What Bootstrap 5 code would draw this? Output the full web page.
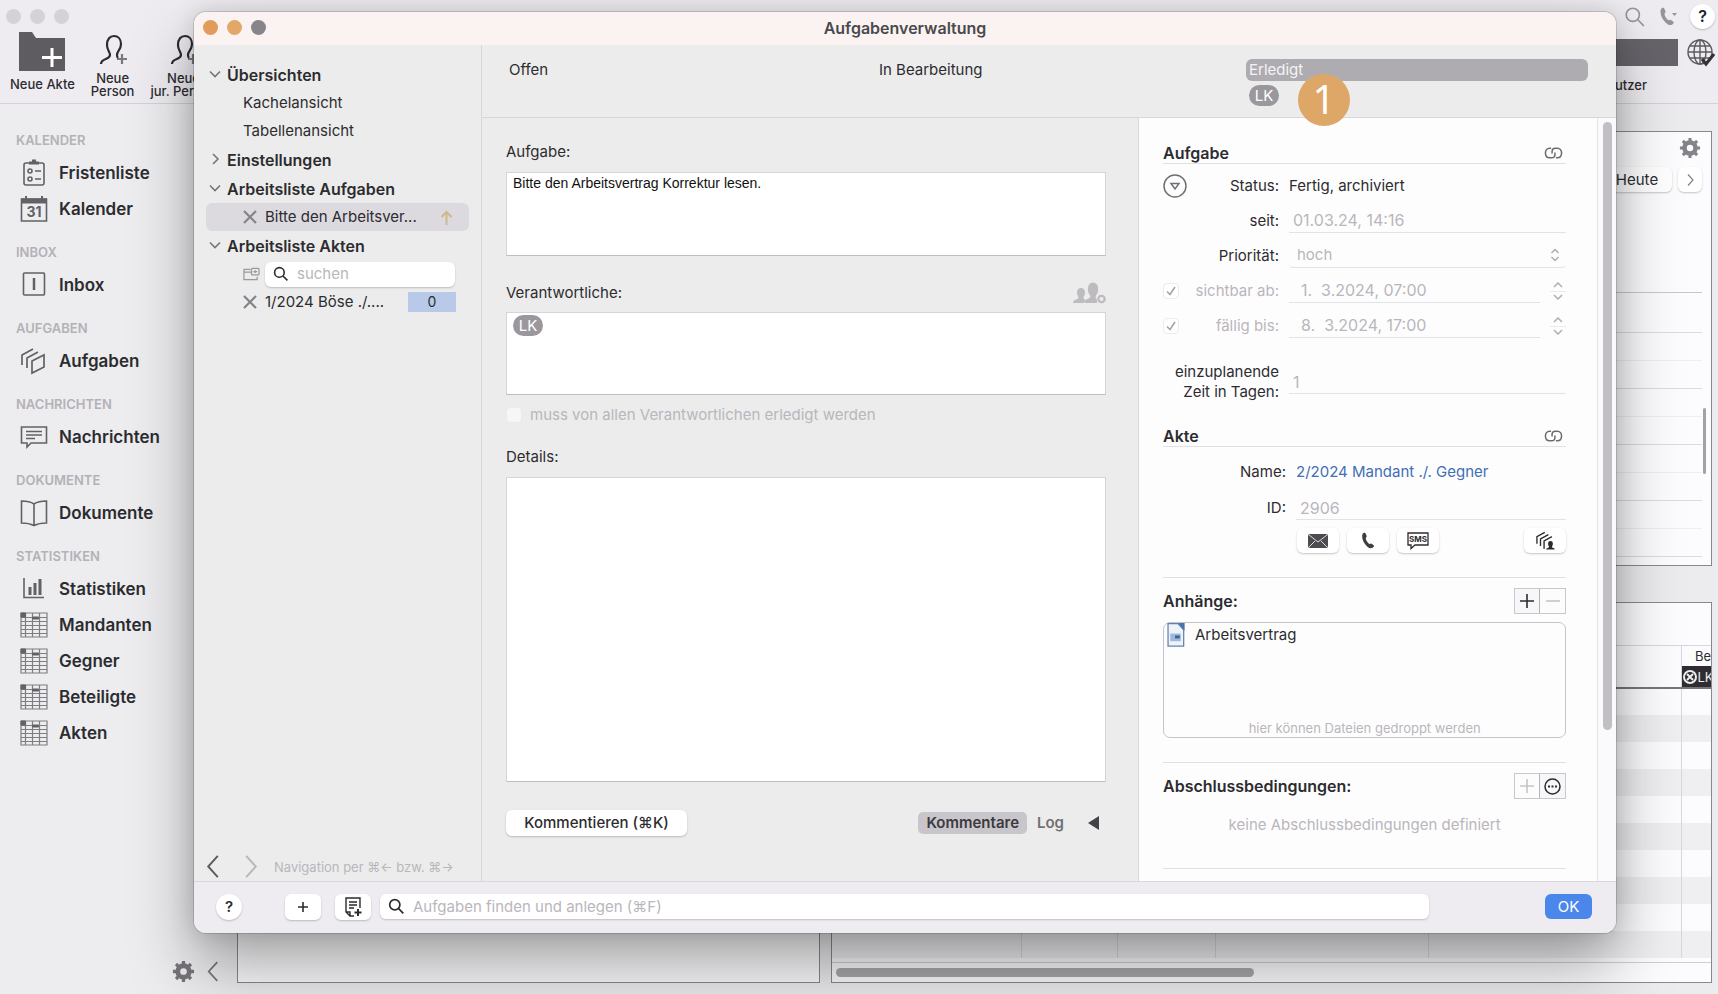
<!DOCTYPE html>
<html lang="de">
<head>
<meta charset="utf-8">
<meta name="viewport" content="width=device-width, initial-scale=1">
<title>Aufgabenverwaltung</title>
<link href="https://cdn.jsdelivr.net/npm/bootstrap@5.3.0/dist/css/bootstrap.min.css" rel="stylesheet">
<style>
:root{--ink:#2c2c30;--muted:#b9b6bc;--line:#d9d6dc;--pane:#ececec}
body{font-family:Inter,"Liberation Sans",sans-serif;font-size:15px;line-height:20px;color:var(--ink);background:#ececee;overflow:hidden}
svg{display:block;flex:none}
svg:not([fill]){fill:none}
svg:not([stroke]){stroke:currentColor}
button{font:inherit;color:inherit;border:0;background:none;padding:0}
input,select,textarea{font:inherit;color:inherit}
input:disabled,select:disabled{opacity:1;color:var(--muted)}
::placeholder{color:var(--muted);opacity:1}
.min0{min-width:0;min-height:0}
/* main window */
.app{min-height:100vh}
.topbar{height:104px;border-bottom:1px solid #d3d1d6;background:#eeecf0;font-size:13px;line-height:13px;font-weight:500}
.dots i{width:15px;height:15px;border-radius:50%;background:#d4d2d6}
.tool{text-align:center}
.two{padding-top:6px}
.two span{display:block}
.side{width:237px;flex:none;padding:11px 0 0 16px;background:#ededef}
.side h2{font-size:13px;line-height:20px;padding:15px 0 5px;margin:0;color:#b4b1b7;font-weight:600}
.side a{height:36px;font-size:17px;font-weight:600;color:var(--ink);text-decoration:none;padding-left:4px;gap:11px}
.side a svg{color:#626166;width:28px;height:28px}
.main{padding:27px 6px 11px 0;gap:11px}
.leftpane{width:583px;flex:none}
.panel{background:#fcfbfd;border:1px solid #8a888c}
.softbtn{background:#fff;border-radius:6px;box-shadow:0 1px 2px rgba(0,0,0,.22);display:inline-flex;align-items:center;justify-content:center}
.cal{height:435px}
.cal .hour{height:56px;border-top:1px solid #dcdade}
.cal .hour::before{content:"";display:block;border-top:1px solid #efedf1;margin-top:27px}
.cal .short{height:40px;border-top:1px solid #c9c7cc}
.cal .end{height:9px;border-top:1px solid #dcdade}
.cal .vbar{width:3px;height:66px;right:5px;top:276px;background:#a3a1a6;border-radius:2px}
.grid-t{table-layout:fixed;width:100%;border-collapse:collapse}
.grid-t td,.grid-t th{border-right:1px solid #d9d7dc;padding:0;height:27px;font-weight:400}
.grid-t th{height:41px;border-bottom:2px solid #77757a;font-size:13px;line-height:20px;vertical-align:bottom}
.grid-t tr>:last-child{border-right:0}
.grid-t tbody tr:nth-child(even){background:#efeff2}
.cellbadge{background:#2f2d31;color:#eee;height:21px}
.hbar{height:9px;border-radius:5px;background:#a9a7ab;width:418px}
/* dialog */
.dlg{position:absolute;inset:12px 102px 61px 194px;border-radius:12px;background:var(--pane);box-shadow:0 0 0 1px rgba(0,0,0,.14),0 34px 64px rgba(0,0,0,.34),0 0 24px rgba(0,0,0,.14);overflow:hidden}
.tbar{height:33px;background:#fbf3f1;font-weight:600;font-size:16px;color:#4a494d;padding:0 9px 2px;display:grid;grid-template-columns:1fr auto 1fr}
.dlg .dots i:nth-child(1){background:#e19b5a}.dlg .dots i:nth-child(2){background:#e3a868}.dlg .dots i:nth-child(3){background:#87858a}
.tree{width:288px;flex:none;border-right:1px solid var(--line);padding:15px 12px 0}
.tree .grp{height:29px;font-size:16px;font-weight:600;gap:5px;padding-left:2px}
.tree .grp svg{width:14px;height:14px;color:#77757a}
.tree .leaf{height:28px;padding-left:37px;gap:8px;border-radius:6px}
.tree .on{background:#dddadf}
.tree a{color:inherit;text-decoration:none}
.find{background:#fff;border-radius:6px;box-shadow:0 1px 2px rgba(0,0,0,.2);height:25px}
.find input{border:0;background:none;outline:0;min-width:0;padding:0}
.count{background:#b9cae9;width:48px;height:20px;font-size:14px;text-align:center}
.hint{font-size:13px;color:var(--muted)}
.stages{height:73px;border-bottom:1px solid var(--line);padding:14px 28px 0 24px;display:grid;grid-template-columns:repeat(3,minmax(0,1fr));gap:28px;align-content:start}
.stages .st{border-radius:6px;height:22px;padding:0 3px;line-height:22px}
.stages .done{background:#aeacb0;color:#f4f3f5}
.chip{background:#9a989d;color:#fff;border-radius:11px;height:21px;line-height:21px;width:30px;text-align:center;font-size:15px}
.callout-no{position:absolute;left:52px;top:15px;width:52px;height:52px;border-radius:50%;background:#dea767;color:#fff;font:40px/50px "Noto Sans",sans-serif;text-align:center}
.mid{padding:24px 32px 45px 24px}
.box{background:#fff;border:1px solid #d6d3da;border-bottom-color:#bfbcc3;padding:2px 6px}
textarea.box{resize:none;display:block;width:100%;border-radius:0;outline:0}
.taskbox{height:84px;font:14px/16px "Liberation Sans",sans-serif;color:#111}
.dim{color:var(--muted)}
.tick{appearance:none;width:16px;height:16px;border-radius:4px;background:#f6f5f7;border:1px solid #eceaee;margin:0;flex:none}
.tick:checked{background:#fff url("data:image/svg+xml,%3Csvg xmlns='http://www.w3.org/2000/svg' viewBox='0 0 14 14'%3E%3Cpath d='M3 7.5l3 3L11 3' fill='none' stroke='%23a5a3a8' stroke-width='1.6'/%3E%3C/svg%3E")}
.seg{border-radius:5px;font-weight:600;color:#717075;height:22px;padding:0 8px}
.seg.active{background:#c9c6cb;color:#3b3a3e}
.info{width:478px;flex:none;background:#fefdfe;border-left:1px solid var(--line)}
.info .body{padding:24px 31px 0 24px}
.sec{height:22px;border-bottom:1px solid #e2dfe5}
.sec,.cap{font-size:16px;font-weight:600}
.sec svg{color:#6d6b70}
.fr{height:35px;gap:10px}
.fr>.lb{width:116px;flex:none}
.lb label{white-space:nowrap}
.akte .fr{height:36px}.akte .fr>.lb{width:123px}
.ul{font-size:16px;border:0;border-bottom:1px solid #e4e1e7;background:none;height:24px;width:100%;min-width:0;padding:0 4px;border-radius:0;outline:0}
.ul.wide{padding-left:12px}
select.ul{font-size:15px;appearance:none;border-radius:4px;background:url("data:image/svg+xml,%3Csvg xmlns='http://www.w3.org/2000/svg' viewBox='0 0 12 16'%3E%3Cpath d='M2.500 6L6 2.500 9.500 6M2.500 10L6 13.500 9.500 10' fill='none' stroke='%23b0adb3' stroke-width='1.500'/%3E%3C/svg%3E") right 5px center/12px 16px no-repeat}
.stp{width:16px;flex:none;color:#b0adb3}
.stp button{height:11px;display:flex;align-items:center;justify-content:center}
.stp button+button{border-top:1px solid #eceaee}
.plan{height:78px}
.ico{width:42px;height:25px}
.rule{border-top:1px solid #e2dfe5;padding-top:10px}
.pair{border:1px solid #c9c6cc;height:26px;background:#f7f6f8}
.pair button{width:25px;display:flex;align-items:center;justify-content:center}
.pair .off{color:#c6c3c9;background:#fdfcfd}
.pair .lft{border-right:1px solid #b5b2b8}
.drop{height:116px;border:1px solid #c6c3c9;border-radius:7px}
.track{width:19px;border-left:1px solid #e6e3e8;background:#faf9fb;padding:4px 4px 0 5px}
.track div{height:608px;border-radius:5px;background:#c1bec4}
.foot{height:52px;border-top:1px solid var(--line);background:#eeecf0;padding:0 24px 2px 22px}
.foot .w36{width:36px;height:26px}
.ok{width:47px;height:25px;border-radius:6px;background:#4b86ea;color:#fff}
</style>
</head>
<body>
<svg width="0" height="0" class="position-absolute" aria-hidden="true">
<symbol id="tbl" viewBox="0 0 28 28"><path d="M1 2h26v24H1zM1 6.500h26M1 10.500h26M1 14.500h26M1 18.500h26M1 22.500h26M5.500 2v24M12.500 2v24M19.500 2v24" stroke-width="1.200" opacity=".8"/><path d="M1 2h4.500v4H1zM12.500 6h6v2h-6z" fill="currentColor"/></symbol>
<symbol id="person" viewBox="0 0 28 32"><path d="M2 30c0-6 9-4 9-9 0-3-3-5-3-10 0-6 3-9 7-9s7 3 7 8c0 6-4 7-4 11 0 1 0 2 1 3" stroke-width="2.200"/><path d="M23 20v10M18 25h10" stroke-width="2.200" opacity=".6"/></symbol>
<symbol id="gear" viewBox="0 0 24 24"><circle cx="12" cy="12" r="6" stroke-width="5"/><path d="M12 1v4M12 19v4M1 12h4M19 12h4M4.200 4.200l3 3M16.800 16.800l3 3M4.200 19.800l3-3M16.800 7.200l3-3" stroke-width="3.400"/></symbol>
<symbol id="lens" viewBox="0 0 20 20"><circle cx="8" cy="8" r="6"/><path d="M12.500 12.500L18 18"/></symbol>
<symbol id="phone" viewBox="0 0 20 20"><path d="M5 1c1-.7 2 0 2.500 1l1 2.500c.3 1-.8 1.500-1 2.500 0 2 2.500 5.500 4 6.200.8.300 1.600-.7 2.500-.2l2 1.500c.8.700 1 1.300.3 2-2 2.500-5 2-7.800-1C5 12 3.500 8 3.500 4.500 3.500 3 4 1.800 5 1z" fill="currentColor" stroke="none"/></symbol>
<symbol id="down" viewBox="0 0 14 14"><path d="M2 3.500l5 5 5-5" stroke-width="1.600"/></symbol>
<symbol id="cross" viewBox="0 0 14 14"><path d="M1 1l12 12M13 1L1 13" stroke-width="2.200"/></symbol>
<symbol id="link" viewBox="0 0 20 14"><path d="M7.500 2H6C3 2 1.500 4.200 1.500 7S3 12 6 12h2c2 0 3.500-1.500 3.500-3.500V6.500M12.500 12H14c3 0 4.500-2.200 4.500-5S17 2 14 2h-2C10 2 8.500 3.500 8.500 5.500v2" stroke-width="1.600"/></symbol>
<symbol id="stack" viewBox="0 0 28 28"><path d="M2 18V8l11-6M7 21V11l11-6M12 14l12-6v12l-12 6z" stroke-width="1.700"/></symbol>
<symbol id="back" viewBox="0 0 14 24"><path d="M12 1L2 12l10 11" stroke-width="2"/></symbol>
</svg>

<div class="app d-flex flex-column position-relative">
  <header class="topbar d-flex justify-content-between">
    <div>
      <div class="dots d-flex" style="gap:9px;padding:9px 0 0 6px"><i></i><i></i><i></i></div>
      <div class="d-flex align-items-start" style="padding:6px 0 0 10px;gap:16px">
        <button class="tool"><svg class="mx-auto" width="48" height="42" viewBox="0 0 48 42" stroke="none"><path d="M1 2h13l4 6h29v33H1z" fill="#5e5b61"/><path d="M34 18v19M24 27.500h20" stroke="#fff" stroke-width="3"/></svg><span class="d-block" style="padding-top:6px">Neue Akte</span></button>
        <button class="tool"><svg class="mx-auto mt-1" width="28" height="32"><use href="#person"/></svg><div class="two"><span>Neue</span><span>Person</span></div></button>
        <button class="tool"><svg class="mx-auto mt-1" width="28" height="32"><use href="#person"/></svg><div class="two"><span>Neue</span><span>jur. Person</span></div></button>
      </div>
    </div>
    <div class="d-flex flex-column align-items-end" style="padding:4px 3px 0 0">
      <div class="d-flex align-items-center" style="gap:11px;color:#96949a">
        <svg width="22" height="22" stroke-width="1.500"><use href="#lens"/></svg>
        <svg width="22" height="22" viewBox="0 0 22 20"><use href="#phone" width="20" height="20"/><path d="M15 6h5l-2.500 3z" fill="currentColor" stroke="none"/></svg>
        <button class="softbtn rounded-circle fs-6 fw-semibold text-dark" style="width:25px;height:25px" aria-label="Hilfe">?</button>
      </div>
      <div class="d-flex align-items-start" style="gap:9px;padding-top:10px">
        <div><div style="width:110px;height:27px;background:#66646a"></div><span class="d-block" style="padding:13px 0 0 23px">Benutzer</span></div>
        <svg width="28" height="28" viewBox="0 0 28 28" stroke="#5c5a60" stroke-width="1.400"><circle cx="13" cy="13" r="12"/><ellipse cx="13" cy="13" rx="6" ry="12"/><path d="M13 1v24M1 13h24M3 7h20M3 19h20"/><path d="M15 20l4 5 8-10" stroke="#333" stroke-width="3"/></svg>
      </div>
    </div>
  </header>

  <div class="d-flex flex-grow-1 min0">
    <nav class="side d-flex flex-column">
      <h2>KALENDER</h2>
      <a href="#" class="d-flex align-items-center"><svg viewBox="0 0 28 28" stroke-width="1.600"><rect x="4" y="4" width="20" height="22" rx="2"/><path d="M9 4h10M12 2h4" stroke-width="3"/><circle cx="10" cy="12" r="2"/><circle cx="10" cy="20" r="2"/><path d="M15 12h6M15 20h6"/></svg>Fristenliste</a>
      <a href="#" class="d-flex align-items-center"><svg viewBox="0 0 28 28" stroke-width="1.600"><path d="M1.500 4h25v22h-25z"/><path d="M1.500 6h25" stroke-width="5"/><path d="M6 1v4M22 1v4" stroke-width="2"/><text x="14" y="22" font-size="14" font-weight="700" text-anchor="middle" fill="currentColor" stroke="none">31</text></svg>Kalender</a>
      <h2>INBOX</h2>
      <a href="#" class="d-flex align-items-center"><svg viewBox="0 0 28 28" stroke-width="1.600"><rect x="3.500" y="2" width="21" height="22" rx="1"/><path d="M14 7v12" stroke-width="2.500"/></svg>Inbox</a>
      <h2>AUFGABEN</h2>
      <a href="#" class="d-flex align-items-center"><svg><use href="#stack"/></svg>Aufgaben</a>
      <h2>NACHRICHTEN</h2>
      <a href="#" class="d-flex align-items-center"><svg viewBox="0 0 28 28" stroke-width="1.600"><path d="M1.500 4h25v16H11l-4 4v-4H1.500zM6 8.500h16M6 12h16M6 15.500h9"/></svg>Nachrichten</a>
      <h2>DOKUMENTE</h2>
      <a href="#" class="d-flex align-items-center"><svg viewBox="0 0 28 28" stroke-width="1.600"><path d="M14 5c-3-2-8-3-12.500-3v22c4.500 0 9.500 1 12.500 2.500 3-1.500 8-2.500 12.500-2.500V2C22 2 17 3 14 5zv21"/></svg>Dokumente</a>
      <h2>STATISTIKEN</h2>
      <a href="#" class="d-flex align-items-center"><svg viewBox="0 0 28 28" stroke-width="1.600"><path d="M4 3v19.500h20"/><path d="M10 12v8M15 8v12M20 4v16" stroke-width="3"/></svg>Statistiken</a>
      <a href="#" class="d-flex align-items-center"><svg><use href="#tbl"/></svg>Mandanten</a>
      <a href="#" class="d-flex align-items-center"><svg><use href="#tbl"/></svg>Gegner</a>
      <a href="#" class="d-flex align-items-center"><svg><use href="#tbl"/></svg>Beteiligte</a>
      <a href="#" class="d-flex align-items-center"><svg><use href="#tbl"/></svg>Akten</a>
      <div class="mt-auto d-flex justify-content-end align-items-center" style="gap:12px;padding:0 18px 11px 0;color:#77757a"><svg width="23" height="23"><use href="#gear"/></svg><svg width="12" height="21"><use href="#back"/></svg></div>
    </nav>
    <main class="main d-flex flex-grow-1 min0">
      <div class="panel leftpane"></div>
      <div class="d-flex flex-column flex-grow-1 min0" style="gap:36px">
        <section class="panel cal position-relative d-flex flex-column">
          <div style="padding:5px 10px 0;color:#85838a"><svg class="ms-auto" width="22" height="22"><use href="#gear"/></svg></div>
          <div class="d-flex justify-content-end" style="gap:6px;padding:8px 9px 0"><button class="softbtn" style="width:70px;height:25px">Heute</button><button class="softbtn" style="width:24px;height:25px" aria-label="Weiter"><svg width="9" height="12" viewBox="0 0 14 24" stroke="#85838a"><path d="M2 1l10 11L2 23" stroke-width="2.500"/></svg></button></div>
          <div class="mt-auto" style="padding-right:9px"><div class="short"></div><div class="hour"></div><div class="hour"></div><div class="hour"></div><div class="hour"></div><div class="end"></div></div>
          <div class="vbar position-absolute"></div>
        </section>
        <section class="panel flex-grow-1 d-flex flex-column">
          <div style="height:43px;border-bottom:1px solid #d9d7dc"></div>
          <table class="grid-t">
            <colgroup><col style="width:189px"><col style="width:96px"><col style="width:98px"><col style="width:213px"><col><col style="width:30px"></colgroup>
            <thead><tr><th></th><th></th><th></th><th></th><th></th><th><div class="text-end overflow-hidden">Be</div><div class="cellbadge d-flex align-items-center overflow-hidden"><svg style="margin:0 1px" width="14" height="14" viewBox="0 0 14 14" stroke-width="2"><circle cx="7" cy="7" r="6"/><path d="M4 4l6 6M10 4l-6 6"/></svg>LK</div></th></tr></thead>
            <tbody>
              <tr><td></td><td></td><td></td><td></td><td></td><td></td></tr><tr><td></td><td></td><td></td><td></td><td></td><td></td></tr>
              <tr><td></td><td></td><td></td><td></td><td></td><td></td></tr><tr><td></td><td></td><td></td><td></td><td></td><td></td></tr>
              <tr><td></td><td></td><td></td><td></td><td></td><td></td></tr><tr><td></td><td></td><td></td><td></td><td></td><td></td></tr>
              <tr><td></td><td></td><td></td><td></td><td></td><td></td></tr><tr><td></td><td></td><td></td><td></td><td></td><td></td></tr>
              <tr><td></td><td></td><td></td><td></td><td></td><td></td></tr><tr><td></td><td></td><td></td><td></td><td></td><td></td></tr>
            </tbody>
          </table>
          <div class="mt-auto" style="border-top:1px solid #d0ced3;padding:5px 4px"><div class="hbar"></div></div>
        </section>
      </div>
    </main>
  </div>

  <div class="dlg d-flex flex-column" role="dialog" aria-label="Aufgabenverwaltung">
    <div class="tbar align-items-center"><div class="dots d-flex" style="gap:9px"><i></i><i></i><i></i></div><span>Aufgabenverwaltung</span></div>
    <div class="d-flex flex-grow-1 min0">
      <aside class="tree d-flex flex-column">
        <div class="grp d-flex align-items-center"><svg><use href="#down"/></svg>Übersichten</div>
        <div class="leaf d-flex align-items-center"><a href="#">Kachelansicht</a></div>
        <div class="leaf d-flex align-items-center"><a href="#">Tabellenansicht</a></div>
        <div class="grp d-flex align-items-center"><svg viewBox="0 0 14 14"><path d="M5 1l5 5-5 5" stroke-width="1.600"/></svg>Einstellungen</div>
        <div class="grp d-flex align-items-center"><svg><use href="#down"/></svg>Arbeitsliste Aufgaben</div>
        <div class="leaf on d-flex align-items-center pe-3"><svg width="14" height="14" color="#85838a"><use href="#cross"/></svg><a href="#">Bitte den Arbeitsver...</a><svg class="ms-auto" width="13" height="15" viewBox="0 0 13 15" stroke="#cdb98a" stroke-width="2"><path d="M6.500 15V2M1.500 7l5-5 5 5"/></svg></div>
        <div class="grp d-flex align-items-center"><svg><use href="#down"/></svg>Arbeitsliste Akten</div>
        <div class="leaf d-flex align-items-center" style="padding-right:14px"><svg width="17" height="14" viewBox="0 0 18 14" stroke="#9a989d" stroke-width="1.300"><path d="M8 2H1v11h14v-3M1 5h8"/><rect x="9" y="1" width="8" height="7" rx="1"/><path d="M11 4.500h4M13 3v3"/></svg><label class="find d-flex align-items-center flex-grow-1 min0 ps-2 gap-2" style="margin-left:-3px"><svg width="16" height="16" stroke-width="2"><use href="#lens"/></svg><input class="w-100" type="search" placeholder="suchen" aria-label="Akten suchen"></label></div>
        <div class="leaf d-flex align-items-center pe-3"><svg width="14" height="14" color="#85838a"><use href="#cross"/></svg><a href="#">1/2024 Böse ./....</a><span class="count ms-auto" style="margin-right:-3px">0</span></div>
        <div class="mt-auto d-flex align-items-center" style="gap:16px;padding-bottom:3px;color:#5c5a60"><button aria-label="Zurück"><svg width="14" height="23"><use href="#back"/></svg></button><button aria-label="Vor" class="dim ms-2"><svg width="14" height="23" viewBox="0 0 14 24"><path d="M2 1l10 11L2 23" stroke-width="2"/></svg></button><span class="hint text-nowrap">Navigation per ⌘← bzw. ⌘→</span></div>
      </aside>
      <div class="d-flex flex-column flex-grow-1 min0">
        <div class="stages">
          <div class="st">Offen</div><div class="st">In Bearbeitung</div>
          <div class="position-relative"><div class="st done">Erledigt</div><div class="chip mt-1" style="margin-left:3px">LK</div><div class="callout-no">1</div></div>
        </div>
        <div class="d-flex flex-grow-1 min0">
          <form class="mid d-flex flex-column flex-grow-1 min0">
            <label for="aufgabe" style="margin-bottom:10px">Aufgabe:</label>
            <textarea id="aufgabe" class="box taskbox">Bitte den Arbeitsvertrag Korrektur lesen.</textarea>
            <div class="d-flex justify-content-between align-items-center" style="margin:27px 0 9px;height:20px"><span>Verantwortliche:</span><svg width="34" height="24" viewBox="0 0 34 24" stroke="none" color="#bdbac0"><path d="M1 22c0-4 5.500-3 5.500-6-2.500-3-2-9 2.500-9s5 6 2.500 9c0 2 1 2 2 3l-2 3zM12.500 22c0-5 6-3.500 6-7C14.500 11 15 1.500 21 1.500s6.500 9 3 13c-1 2.500 0 3 1 4V22z" fill="currentColor"/><circle cx="29.500" cy="18" r="3.200" stroke="currentColor" stroke-width="2.200"/></svg></div>
            <div class="box" style="height:83px"><div class="chip">LK</div></div>
            <div class="d-flex align-items-center gap-2 dim" style="margin:10px 0 22px"><input type="checkbox" class="tick" id="alle" disabled><label for="alle">muss von allen Verantwortlichen erledigt werden</label></div>
            <label for="details" style="margin-bottom:10px">Details:</label>
            <textarea id="details" class="box flex-grow-1 min0"></textarea>
            <div class="d-flex align-items-center" style="margin-top:28px;height:26px"><button type="button" class="softbtn h-100 fw-medium" style="width:181px">Kommentieren (⌘K)</button><button type="button" class="seg active ms-auto">Kommentare</button><button type="button" class="seg" style="margin:0 16px 0 2px">Log</button><button type="button" style="padding-right:7px" aria-label="Einklappen"><svg width="11" height="14" viewBox="0 0 11 14"><path d="M11 0v14L0 7z" fill="#444247" stroke="none"/></svg></button></div>
          </form>
          <div class="info d-flex">
            <div class="body flex-grow-1 min0 overflow-hidden">
              <div class="sec d-flex justify-content-between align-items-center mb-1">Aufgabe<svg style="margin-right:3px" width="19" height="14"><use href="#link"/></svg></div>
              <div class="fr d-flex align-items-center"><div class="lb d-flex align-items-center justify-content-between"><button type="button" aria-label="Status ändern"><svg width="24" height="24" viewBox="0 0 24 24" stroke="#717075" stroke-width="1.500"><circle cx="12" cy="12" r="11"/><path d="M8 9.500h8l-4 5.500z"/></svg></button><span>Status:</span></div><span>Fertig, archiviert</span></div>
              <div class="fr d-flex align-items-center"><label for="seit" class="lb text-end">seit:</label><div class="flex-grow-1"><input id="seit" class="ul" value="01.03.24, 14:16" disabled></div></div>
              <div class="fr d-flex align-items-center"><label for="prio" class="lb text-end">Priorität:</label><div class="flex-grow-1"><select id="prio" class="ul ps-2" disabled><option>hoch</option></select></div></div>
              <div class="fr d-flex align-items-center"><div class="lb d-flex align-items-center justify-content-between dim"><input type="checkbox" class="tick" checked disabled id="sb"><label for="sb">sichtbar ab:</label></div><input class="ul wide" value="1.  3.2024, 07:00" aria-label="sichtbar ab" disabled><div class="stp"><button type="button" class="w-100" aria-label="später"><svg width="10" height="6" viewBox="0 0 10 6" stroke-width="1.500"><path d="M1 5l4-4 4 4"/></svg></button><button type="button" class="w-100" aria-label="früher"><svg width="10" height="6" viewBox="0 0 10 6" stroke-width="1.500"><path d="M1 1l4 4 4-4"/></svg></button></div></div>
              <div class="fr d-flex align-items-center"><div class="lb d-flex align-items-center justify-content-between dim"><input type="checkbox" class="tick" checked disabled id="fb"><label for="fb">fällig bis:</label></div><input class="ul wide" value="8.  3.2024, 17:00" aria-label="fällig bis" disabled><div class="stp"><button type="button" class="w-100" aria-label="später"><svg width="10" height="6" viewBox="0 0 10 6" stroke-width="1.500"><path d="M1 5l4-4 4 4"/></svg></button><button type="button" class="w-100" aria-label="früher"><svg width="10" height="6" viewBox="0 0 10 6" stroke-width="1.500"><path d="M1 1l4 4 4-4"/></svg></button></div></div>
              <div class="fr plan d-flex align-items-center"><label for="tage" class="lb text-end">einzuplanende Zeit in Tagen:</label><div class="flex-grow-1"><input id="tage" class="ul" value="1" disabled></div></div>
              <div class="akte">
                <div class="sec d-flex justify-content-between align-items-center mt-1" style="margin-bottom:7px">Akte<svg style="margin-right:3px" width="19" height="14"><use href="#link"/></svg></div>
                <div class="fr d-flex align-items-center"><span class="lb text-end">Name:</span><a href="#" class="text-decoration-none" style="color:#3f6fb5">2/2024 Mandant ./. Gegner</a></div>
                <div class="fr d-flex align-items-center"><label for="aid" class="lb text-end">ID:</label><div class="flex-grow-1"><input id="aid" class="ul" value="2906" disabled></div></div>
                <div class="d-flex" style="gap:8px;padding:2px 0 24px 134px">
                  <button type="button" class="softbtn ico" aria-label="E-Mail"><svg width="20" height="14" viewBox="0 0 20 14"><rect width="20" height="14" rx="2" fill="#4d4b50" stroke="none"/><path d="M1 1l9 7 9-7M1 13l6-6M19 13l-6-6" stroke="#ddd"/></svg></button>
                  <button type="button" class="softbtn ico" aria-label="Anrufen"><svg width="18" height="18" color="#3f3d42"><use href="#phone"/></svg></button>
                  <button type="button" class="softbtn ico" aria-label="SMS"><svg width="22" height="18" viewBox="0 0 22 18" stroke-width="1.300"><path d="M1 1h20v12H8l-4 3.500V13H1z"/><text x="11" y="10" font-size="8" font-weight="700" text-anchor="middle" fill="currentColor" stroke="none">SMS</text></svg></button>
                  <button type="button" class="softbtn ico ms-auto" aria-label="Aufgaben der Akte"><svg width="21" height="20" viewBox="0 0 28 28" stroke-width="1.900"><path d="M2 18V8l11-6M7 21V11l11-6M12 25V14l11-6"/><path d="M15 26c0-3 4-2 4-4-2-3-2-8 2-8s4 5 2 8c0 2 4 1 4 4z" fill="currentColor" stroke="none"/></svg></button>
                </div>
              </div>
              <div class="rule" style="padding-bottom:24px">
                <div class="cap d-flex justify-content-between align-items-center" style="margin-bottom:8px">Anhänge:<div class="pair d-flex"><button type="button" class="lft" aria-label="Anhang hinzufügen"><svg width="14" height="14" viewBox="0 0 14 14" stroke-width="1.600"><path d="M7 0v14M0 7h14"/></svg></button><button type="button" class="off" aria-label="Anhang entfernen"><svg width="14" height="14" viewBox="0 0 14 14" stroke-width="1.600"><path d="M0 7h14"/></svg></button></div></div>
                <div class="drop d-flex flex-column"><div class="d-flex align-items-center" style="gap:10px;padding-left:3px"><svg width="18" height="24" viewBox="0 0 18 25"><path d="M.7.700H11L17 7v17H.7z" fill="#eef3fb" stroke="#6681a8" stroke-width="1.300"/><path d="M11 0h7v8z" fill="#4a72ad" stroke="none"/><path d="M3 11h11v8H3z" fill="#9fb8de" stroke="none"/><path d="M8 13h5v3H8z" fill="#40608f" stroke="none"/></svg><a href="#" class="text-reset text-decoration-none">Arbeitsvertrag</a></div><div class="hint text-center mt-auto" style="line-height:18px">hier können Dateien gedroppt werden</div></div>
              </div>
              <div class="rule" style="padding-bottom:33px">
                <div class="cap d-flex justify-content-between align-items-center" style="margin-bottom:16px">Abschlussbedingungen:<div class="pair d-flex"><button type="button" class="off lft" aria-label="Bedingung hinzufügen"><svg width="14" height="14" viewBox="0 0 14 14" stroke-width="1.600"><path d="M7 0v14M0 7h14"/></svg></button><button type="button" aria-label="Mehr"><svg width="17" height="17" viewBox="0 0 17 17" stroke-width="1.500"><circle cx="8.500" cy="8.500" r="7.500"/><path d="M4 8.500h2M7.500 8.500h2M11 8.500h2" stroke-width="2"/></svg></button></div></div>
                <div class="dim text-center">keine Abschlussbedingungen definiert</div>
              </div>
              <div class="rule"></div>
            </div>
            <div class="track"><div></div></div>
          </div>
        </div>
      </div>
    </div>
    <footer class="foot d-flex align-items-center">
      <button class="softbtn rounded-circle fw-semibold" style="width:26px;height:26px" aria-label="Hilfe">?</button>
      <button class="softbtn w36" style="margin-left:43px" aria-label="Neue Aufgabe"><svg width="10" height="10" viewBox="0 0 10 10" stroke-width="1.600"><path d="M5 0v10M0 5h10"/></svg></button>
      <button class="softbtn w36" style="margin:0 9px 0 14px" aria-label="Aus Vorlage"><svg width="18" height="20" viewBox="0 0 18 20" stroke-width="1.400"><path d="M16 11V1H2v14l4 4h4M5 5h8M5 8h8M5 11h5M2 15h4v4"/><path d="M14 12v7M10.500 15.500h7" stroke-width="2"/></svg></button>
      <label class="find d-flex align-items-center flex-grow-1 ps-2 gap-2"><svg width="17" height="17" stroke-width="2"><use href="#lens"/></svg><input class="w-100" type="search" placeholder="Aufgaben finden und anlegen (⌘F)" aria-label="Aufgaben finden und anlegen"></label>
      <button class="ok" style="margin-left:116px">OK</button>
    </footer>
  </div>
</div>
<script src="https://cdn.jsdelivr.net/npm/bootstrap@5.3.0/dist/js/bootstrap.bundle.min.js"></script>
</body>
</html>
